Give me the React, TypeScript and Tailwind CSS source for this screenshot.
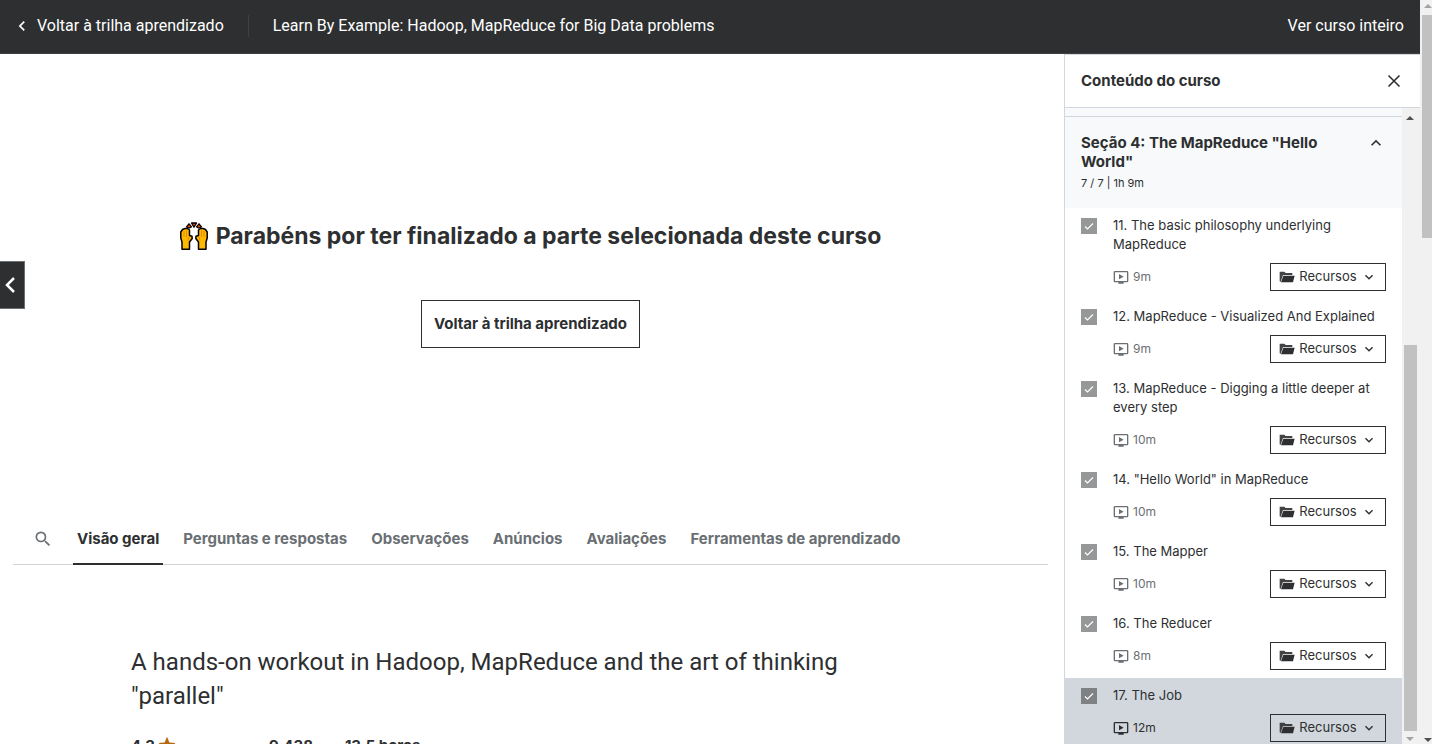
import type { ReactNode } from "react";

type Lecture = { id: number; title: string; time: string; active?: boolean };

const LECTURES: Lecture[] = [
  { id: 11, title: "The basic philosophy underlying MapReduce", time: "9m" },
  { id: 12, title: "MapReduce - Visualized And Explained", time: "9m" },
  { id: 13, title: "MapReduce - Digging a little deeper at every step", time: "10m" },
  { id: 14, title: '"Hello World" in MapReduce', time: "10m" },
  { id: 15, title: "The Mapper", time: "10m" },
  { id: 16, title: "The Reducer", time: "8m" },
  { id: 17, title: "The Job", time: "12m", active: true },
];

const TABS = [
  "Visão geral",
  "Perguntas e respostas",
  "Observações",
  "Anúncios",
  "Avaliações",
  "Ferramentas de aprendizado",
];

function Icon({ className, children }: { className: string; children: ReactNode }) {
  return (
    <svg viewBox="0 0 24 24" className={className} fill="currentColor" aria-hidden="true">
      {children}
    </svg>
  );
}

function ChevronLeft({ className }: { className: string }) {
  return (
    <Icon className={className}>
      <path d="M15.41 7.41 14 6l-6 6 6 6 1.41-1.41L10.83 12z" />
    </Icon>
  );
}

function RaisedHands() {
  return (
    <svg viewBox="0 0 28 28" className="size-7 shrink-0" aria-hidden="true">
      <g id="hand">
        <path
          d="M2 27.200V20L.8 16V10L2.500 7.500 5 6.500H7.500L9.500 8V13.500L12 14.200 12.200 16.500 9.500 20V27.200z"
          fill="#ffb900"
          stroke="#000"
          strokeWidth="1.500"
          strokeLinejoin="round"
        />
        <path d="M4 9v6M6.500 8.500V15M9 15 8 18.500" stroke="#d98200" strokeWidth=".8" fill="none" />
      </g>
      <use href="#hand" transform="matrix(-1 0 0 1 28 0)" />
      <g fill="#f7480c" stroke="#000" strokeWidth="1.300" strokeLinejoin="round">
        <path d="M6.500 5 9 1.800 11.500 4.800 9.500 6z" />
        <path d="M21.500 5 19 1.800 16.500 4.800 18.500 6z" />
        <path d="M11.500 1h5L14 5.200z" />
      </g>
    </svg>
  );
}

function LectureRow({ lecture }: { lecture: Lecture }) {
  const { id, title, time, active } = lecture;
  return (
    <li className={`flex gap-4 px-4 py-2 ${active ? "bg-[#d1d7dc]" : "bg-white"}`}>
      <span className="mt-0.5 grid size-4 shrink-0">
        <input
          id={`lecture-${id}`}
          type="checkbox"
          defaultChecked
          className={`col-start-1 row-start-1 size-4 appearance-none ${active ? "bg-[#7f8285]" : "bg-[#969798]"}`}
        />
        <svg
          viewBox="0 0 16 16"
          className="pointer-events-none col-start-1 row-start-1 size-4"
          fill="none"
          stroke="#fff"
          strokeWidth="1.2"
          aria-hidden="true"
        >
          <path d="m4 8.500 2.500 2.500L12 5.500" />
        </svg>
      </span>
      <div className="flex min-w-0 flex-1 flex-col gap-[9px]">
        <label htmlFor={`lecture-${id}`} className="text-[13px] leading-[19px]">
          {`${id}. ${title}`}
        </label>
        <div className="flex h-7 items-center justify-between">
          <span className={`flex items-center gap-1 text-xs ${active ? "" : "text-[#6a6f73]"}`}>
            <Icon className="size-4">
              <path d="M21 3H3C1.900 3 1 3.900 1 5v13c0 1.100.9 2 2 2h5v2h8v-2h5c1.100 0 2-.9 2-2V5c0-1.100-.9-2-2-2zm0 15H3V5h18v13zM9 7.500v8l7-4z" />
            </Icon>
            {time}
          </span>
          <button
            type="button"
            className="flex h-7 w-[116px] items-center justify-center gap-1 border border-[#2d2f31] text-[13px]"
          >
            <Icon className="size-4">
              <path d="M1 4h7l2 2h10v3H6L2.500 19H2a1 1 0 0 1-1-1z" opacity=".9" />
              <path d="M6.500 10H23.500L21 20H3z" />
            </Icon>
            Recursos
            <Icon className="size-4">
              <path d="M16.590 8.590 12 13.170 7.410 8.590 6 10l6 6 6-6z" />
            </Icon>
          </button>
        </div>
      </div>
    </li>
  );
}

function Arrow({ up, className }: { up?: boolean; className: string }) {
  return (
    <svg viewBox="0 0 8 4" className={`h-1 w-2 ${className}`} fill="currentColor" aria-hidden="true">
      <path d={up ? "M0 4 4 0l4 4z" : "M0 0h8L4 4z"} />
    </svg>
  );
}

export default function App() {
  return (
    <div className="flex h-screen overflow-hidden bg-white font-['Inter',sans-serif] text-[#2d2f31]">
      <div className="flex min-w-0 flex-1 flex-col">
        <header className="flex h-[54px] shrink-0 items-center border-b border-[#3e4143] bg-[#2d2f31] pr-4 pb-0.5 pl-3 font-['Roboto',sans-serif] text-base text-white">
          <a href="#trilha" className="flex items-center gap-[5px]">
            <ChevronLeft className="size-5" />
            Voltar à trilha aprendizado
          </a>
          <span className="mx-6 h-[22px] w-px bg-[#3e4143]" />
          <h1 className="flex-1">Learn By Example: Hadoop, MapReduce for Big Data problems</h1>
          <a href="#curso">Ver curso inteiro</a>
        </header>

        <div className="flex min-h-0 flex-1">
          <main className="flex min-w-0 flex-1 flex-col">
            <section className="flex h-[462px] shrink-0 items-center">
              <button
                type="button"
                aria-label="Anterior"
                className="flex h-12 w-[25px] items-center justify-center border border-l-0 border-[#6a6f73] bg-[#2d2f31] pr-1 text-white"
              >
                <svg viewBox="0 0 12 18" className="h-[18px] w-3" fill="none" stroke="currentColor" strokeWidth="2.500" aria-hidden="true">
                  <path d="M10 2 3 9l7 7" />
                </svg>
              </button>
              <div className="flex flex-1 flex-col items-center gap-12 pr-7 pb-0.5">
                <h2 className="flex items-center gap-2 text-[23px] leading-8 font-bold">
                  <RaisedHands />
                  Parabéns por ter finalizado a parte selecionada deste curso
                </h2>
                <a
                  href="#trilha"
                  className="flex h-12 items-center border border-[#2d2f31] px-3 text-[15px] font-bold"
                >
                  Voltar à trilha aprendizado
                </a>
              </div>
            </section>

            <nav className="mr-4 ml-[13px] flex h-[49px] shrink-0 items-stretch border-b border-[#d1d2d3] text-[15px] font-bold text-[#6a6f73]">
              <button type="button" aria-label="Pesquisar" className="mr-5 ml-5 flex items-center pb-0.5">
                <Icon className="size-5">
                  <path d="M15.500 14h-.79l-.28-.27A6.470 6.470 0 0 0 16 9.500 6.500 6.500 0 1 0 9.500 16c1.610 0 3.090-.59 4.230-1.570l.27.28v.79l5 4.990L20.490 19l-4.990-5zm-6 0C7.010 14 5 11.990 5 9.500S7.010 5 9.500 5 14 7.010 14 9.500 11.990 14 9.500 14z" />
                </Icon>
              </button>
              <div className="flex gap-4">
                {TABS.map((tab, i) => (
                  <button
                    key={tab}
                    type="button"
                    className={`-mb-px border-b-2 px-1 whitespace-nowrap ${i === 0 ? "border-[#2d2f31] text-[#2d2f31]" : "border-transparent"}`}
                  >
                    {tab}
                  </button>
                ))}
              </div>
            </nav>

            <section className="mx-auto flex w-full max-w-[802px] flex-col gap-5 pt-20">
              <p className="font-['Roboto',sans-serif] text-2xl leading-[34px]">
                A hands-on workout in Hadoop, MapReduce and the art of thinking "parallel"
              </p>
              <div className="flex gap-8 text-[15px] leading-[26px] font-bold">
                <span className="flex w-[106px] items-center gap-0.5">
                  4,3
                  <Icon className="size-5 pb-0.5 text-[#b4690e]">
                    <path d="m12 1 3.200 7.600 8.200.7-6.200 5.400 1.900 8L12 18.400l-7.100 4.300 1.900-8L.6 9.300l8.200-.7z" />
                  </Icon>
                </span>
                <span>9.438</span>
                <span>13,5 horas</span>
              </div>
            </section>
          </main>

          <aside className="flex w-[356px] shrink-0 flex-col border-t border-l border-[#d1d7dc]">
            <div className="flex h-[53px] shrink-0 items-center justify-between border-b border-[#d1d7dc] px-4">
              <h2 className="text-[15px] font-bold">Conteúdo do curso</h2>
              <button type="button" aria-label="Fechar">
                <svg viewBox="0 0 20 20" className="size-5" fill="none" stroke="currentColor" strokeWidth="1.600" aria-hidden="true">
                  <path d="m4.500 4.500 11 11m0-11-11 11" />
                </svg>
              </button>
            </div>
            <div className="flex min-h-0 flex-1">
              <div className="min-w-0 flex-1 overflow-hidden">
                <div className="h-2 bg-[#f7f9fa]" />
                <button
                  type="button"
                  className="flex h-[92px] w-full items-start justify-between border-t border-[#d1d7dc] bg-[#f7f9fa] px-4 pt-4 text-left"
                >
                  <span className="flex w-[260px] flex-col gap-1">
                    <span className="text-[15px] leading-[19px] font-bold">Seção 4: The MapReduce "Hello World"</span>
                    <span className="text-[11px] leading-4">7 / 7 | 1h 9m</span>
                  </span>
                  <Icon className="size-5">
                    <path d="m7.410 15.410 4.590-4.580 4.590 4.580L18 14l-6-6-6 6z" />
                  </Icon>
                </button>
                <ul>
                  {LECTURES.map((lecture) => (
                    <LectureRow key={lecture.id} lecture={lecture} />
                  ))}
                </ul>
              </div>
              <div className="flex w-[18px] shrink-0 flex-col items-center justify-between bg-[#f1f1f1] pt-2 pr-0.5 pb-[3px]">
                <Arrow up className="text-[#505050]" />
                <div className="flex flex-col items-center gap-1.5">
                  <div className="h-[386px] w-[13px] bg-[#c1c1c1]" />
                  <Arrow className="text-[#a3a3a3]" />
                </div>
              </div>
            </div>
          </aside>
        </div>
      </div>

      <div className="flex w-3 shrink-0 flex-col items-end justify-between bg-[#f1f1f1] pt-1 pb-0.5">
        <div className="flex flex-col items-end gap-[7px]">
          <Arrow up className="text-[#a3a3a3]" />
          <div className="h-[223px] w-2.5 bg-[#c1c1c1]" />
        </div>
        <Arrow className="text-[#505050]" />
      </div>
    </div>
  );
}
